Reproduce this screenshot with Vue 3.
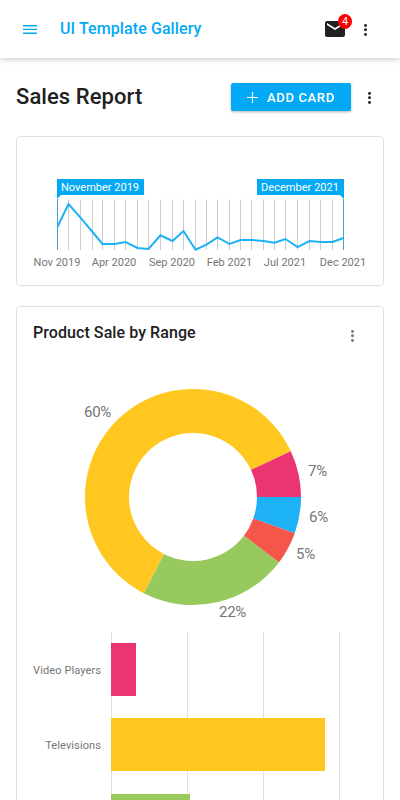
<script setup>
const ticks = [
  [57.5, 226.7], [68.5, 204], [80.5, 217.7], [92.5, 232], [102.5, 244], [114.5, 244],
  [125.5, 242], [137.5, 248], [148.5, 249], [160.5, 235.3], [172.5, 241], [183.5, 231],
  [195.5, 249.7], [206.5, 244.7], [217.5, 237.3], [229.5, 244], [240.5, 240], [251.5, 240],
  [263.5, 240.9], [274.5, 242.7], [285.5, 239], [297.5, 247.2], [309.5, 241], [320.5, 242],
  [332.5, 242], [343.5, 238]
].map(([x, y]) => [x - 17, y - 137])
const line = ticks.map((p) => p.join(',')).join(' ')

const months = [
  { text: 'Nov 2019', x: 40 },
  { text: 'Apr 2020', x: 97 },
  { text: 'Sep 2020', x: 155 },
  { text: 'Feb 2021', x: 212.5 },
  { text: 'Jul 2021', x: 268 },
  { text: 'Dec 2021', x: 326 }
]

function arc(from, to) {
  const pt = (r, deg) => {
    const a = (deg * Math.PI) / 180
    return `${(176 + r * Math.cos(a)).toFixed(2)} ${(130 + r * Math.sin(a)).toFixed(2)}`
  }
  const large = to - from > 180 ? 1 : 0
  return `M${pt(108, from)}A108 108 0 ${large} 1 ${pt(108, to)}L${pt(64, to)}A64 64 0 ${large} 0 ${pt(64, from)}Z`
}
const slices = [
  { color: '#1db2f5', path: arc(0, 19.6), label: '6%', x: 292, y: 155 },
  { color: '#f5564a', path: arc(19.6, 37.3), label: '5%', x: 279, y: 192 },
  { color: '#97c95c', path: arc(37.3, 117.1), label: '22%', x: 202, y: 250 },
  { color: '#ffc720', path: arc(117.1, 334.9), label: '60%', x: 67, y: 50 },
  { color: '#eb3573', path: arc(334.9, 360), label: '7%', x: 291, y: 109 }
]
const bars = [
  { name: 'Video Players', width: 25, color: '#eb3573' },
  { name: 'Televisions', width: 214, color: '#ffc720' },
  { name: '', width: 79, color: '#97c95c' }
]
</script>

<template>
  <div class="page">
    <header class="toolbar">
      <svg class="menu" viewBox="0 0 14 10" aria-hidden="true">
        <path d="M0 0h14v1.400H0zM0 3.700h14v1.400H0zM0 7.600h14v1.400H0z" />
      </svg>
      <div class="brand">UI Template Gallery</div>
      <div class="mail">
        <svg viewBox="0 0 20 16" aria-hidden="true">
          <path d="M18 0H2C.9 0 0 .9 0 2v12c0 1.100.9 2 2 2h16c1.100 0 2-.9 2-2V2c0-1.100-.9-2-2-2zm0 4l-8 5-8-5V2l8 5 8-5v2z" />
        </svg>
        <span class="badge">4</span>
      </div>
      <svg class="dots" viewBox="0 0 3 12" aria-hidden="true">
        <circle cx="1.500" cy="1.500" r="1.450" /><circle cx="1.500" cy="5.700" r="1.450" /><circle cx="1.500" cy="10.500" r="1.450" />
      </svg>
    </header>

    <main>
      <div class="heading">
        <h1>Sales Report</h1>
        <button class="add">
          <svg viewBox="0 0 12 12" aria-hidden="true"><path d="M5.500 0v11M0 5.500h11" /></svg>
          <span>ADD CARD</span>
        </button>
        <svg class="dots" viewBox="0 0 3 12" aria-hidden="true">
          <circle cx="1.500" cy="1.500" r="1.450" /><circle cx="1.500" cy="5.700" r="1.450" /><circle cx="1.500" cy="10.500" r="1.450" />
        </svg>
      </div>

      <section class="card range">
        <svg width="366" height="148">
          <path v-for="t in ticks" :key="t[0]" class="tick" :d="`M${t[0]} 62.500V113`" />
          <polyline class="trend" :points="line" />
          <path class="handle" d="M40.500 62V113M326.500 62V113" />
          <path class="flag" d="M40 42h87v16H44l-4 4zM240 42h87v20l-4-4h-83z" />
          <text class="flag-text" x="44" y="54" textLength="78">November 2019</text>
          <text class="flag-text" x="244" y="54" textLength="78">December 2021</text>
          <text v-for="m in months" :key="m.text" class="month" :x="m.x" y="129">{{ m.text }}</text>
        </svg>
      </section>

      <section class="card sales">
        <div class="card-head">
          <h2>Product Sale by Range</h2>
          <svg class="dots muted" viewBox="0 0 3 12" aria-hidden="true">
            <circle cx="1.500" cy="1.500" r="1.450" /><circle cx="1.500" cy="5.700" r="1.450" /><circle cx="1.500" cy="10.500" r="1.450" />
          </svg>
        </div>
        <svg class="donut" width="366" height="265">
          <g v-for="s in slices" :key="s.label">
            <path :d="s.path" :fill="s.color" />
            <text :x="s.x" :y="s.y">{{ s.label }}</text>
          </g>
        </svg>
        <div class="bars">
          <div v-for="(b, i) in bars" :key="i" class="row">
            <div class="name">{{ b.name }}</div>
            <div class="plot">
              <div class="bar" :style="{ width: b.width + 'px', background: b.color }"></div>
            </div>
          </div>
        </div>
      </section>
    </main>
  </div>
</template>

<style>
body {
  overflow: hidden;
}
</style>

<style scoped>
.page {
  height: 800px;
  overflow: hidden;
  background: #fff;
  color: #212121;
  font-family: Roboto, sans-serif;
}
.toolbar {
  display: flex;
  align-items: center;
  box-sizing: border-box;
  height: 58px;
  padding: 0 33px 0 23px;
  box-shadow: 0 1px 6px rgba(0, 0, 0, 0.24);
}
.menu {
  width: 14px;
  height: 10px;
  margin-top: 2px;
  fill: #03a9f4;
}
.brand {
  flex: 1;
  margin-left: 23px;
  color: #03a9f4;
  font-size: 16px;
  font-weight: 500;
  line-height: 24px;
  letter-spacing: 0.1px;
}
.mail {
  position: relative;
  width: 20px;
  height: 16px;
  margin-right: 10px;
}
.mail svg {
  display: block;
  width: 20px;
  height: 16px;
  fill: #212121;
}
.badge {
  position: absolute;
  top: -7px;
  left: 13px;
  width: 14px;
  height: 15px;
  border-radius: 50%;
  background: #f00;
  color: #fff;
  font-size: 11px;
  line-height: 15px;
  text-align: center;
}
.dots {
  display: block;
  width: 3px;
  height: 12px;
  margin: 2px 0 0 9px;
  fill: #212121;
}
.heading {
  display: flex;
  align-items: center;
  height: 28px;
  padding: 25px 29px 25px 16px;
}
h1 {
  flex: 1;
  margin: 0;
  font-size: 22px;
  font-weight: 500;
  line-height: 28px;
  letter-spacing: 0.07px;
}
.add {
  display: flex;
  align-items: center;
  gap: 8px;
  width: 120px;
  height: 28px;
  padding: 0 0 0 16px;
  border: 0;
  border-radius: 2px;
  background: #03a9f4;
  box-shadow: 0 1px 3px rgba(0, 0, 0, 0.3);
  color: #fff;
  font-family: inherit;
  font-size: 13px;
  font-weight: 500;
  letter-spacing: 0.65px;
}
.add svg {
  width: 12px;
  height: 12px;
  margin-top: 1px;
  stroke: #fff;
  stroke-width: 1.2;
}
.add span {
  margin-top: 1px;
}
.heading .dots {
  margin-left: 17px;
}
.card {
  box-sizing: border-box;
  margin: 0 16px;
  border: 1px solid #e0e0e0;
  border-radius: 4px;
}
.range {
  height: 150px;
  margin-bottom: 20px;
}
.range svg,
.donut {
  display: block;
}
.tick {
  stroke: #ccc;
}
.trend {
  fill: none;
  stroke: #1db2f5;
  stroke-width: 2;
}
.handle {
  stroke: #3ea5d2;
}
.flag {
  fill: #03a9f4;
}
.flag-text {
  fill: #fff;
  font-size: 11px;
}
.month {
  fill: #767676;
  font-size: 11px;
  text-anchor: middle;
}
.sales {
  height: 560px;
}
.card-head {
  display: flex;
  align-items: flex-start;
  height: 60px;
  box-sizing: border-box;
  padding: 15px 29px 0 16px;
}
h2 {
  flex: 1;
  margin: 0;
  font-size: 16px;
  font-weight: 500;
  line-height: 21px;
  letter-spacing: 0.07px;
}
.card-head .dots {
  margin-top: 8px;
}
.muted {
  fill: #757575;
}
.donut text {
  fill: #767676;
  font-size: 15px;
  letter-spacing: -0.3px;
}
.bars {
  padding-left: 16px;
}
.row {
  display: flex;
  align-items: center;
  height: 75.3px;
}
.name {
  width: 68px;
  margin-right: 10px;
  padding-top: 1px;
  color: #767676;
  font-size: 11px;
  letter-spacing: 0.1px;
  text-align: right;
  white-space: nowrap;
}
.plot {
  display: flex;
  align-items: center;
  width: 229px;
  height: 100%;
  background: repeating-linear-gradient(to right, #e0e0e0 0 1px, transparent 1px 76px);
}
.bar {
  height: 53px;
}
</style>
